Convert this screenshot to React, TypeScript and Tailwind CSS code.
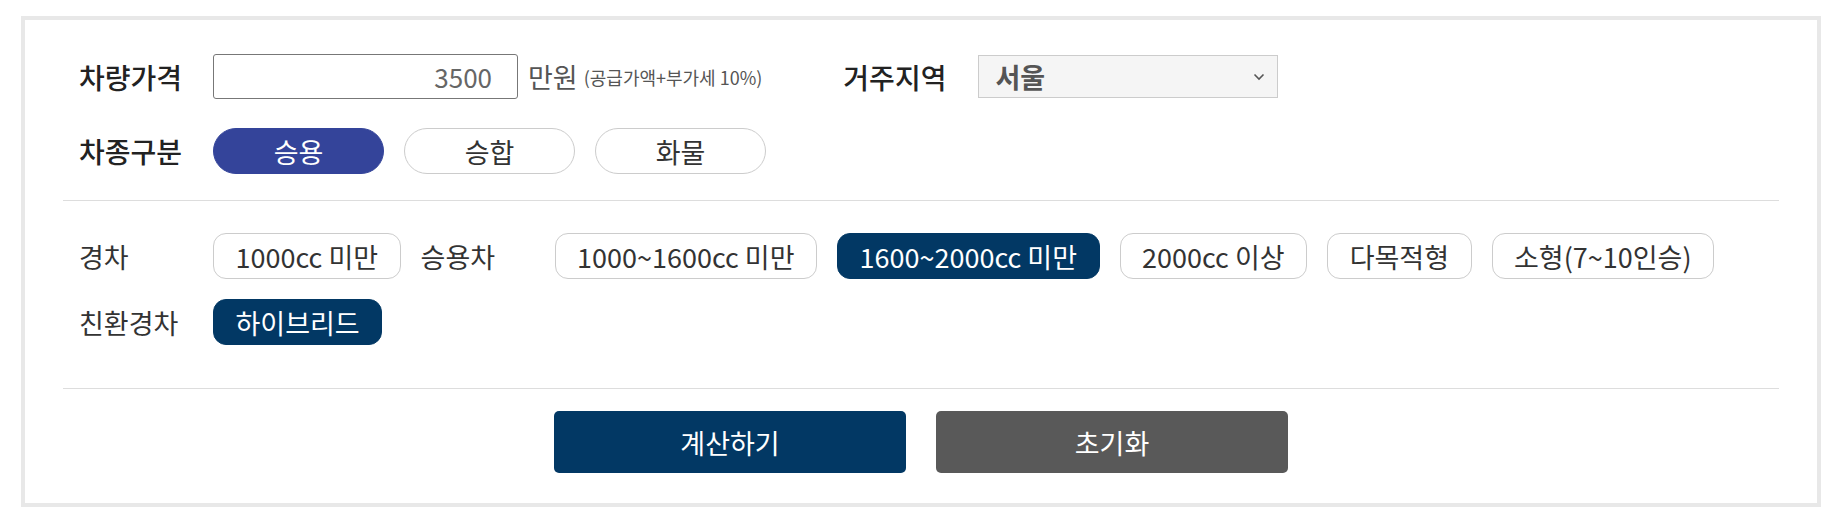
import React from "react";

const font = { fontFamily: '"Noto Sans CJK KR", "Noto Sans", sans-serif' };

function Pill({ label, active }: { label: string; active?: boolean }) {
  return (
    <button
      className={
        active
          ? "w-[171px] h-[46px] rounded-full bg-[#34449a] border border-[#34449a] text-white text-[27px] leading-none"
          : "w-[171px] h-[46px] rounded-full bg-white border border-[#cccccc] text-[#333333] text-[27px] leading-none"
      }
    >
      {label}
    </button>
  );
}

function Chip({ label, active }: { label: string; active?: boolean }) {
  return (
    <button
      className={
        active
          ? "h-[46px] px-[21.5px] rounded-[13px] bg-[#023864] border border-[#023864] text-white text-[27px] leading-none whitespace-nowrap"
          : "h-[46px] px-[21.5px] rounded-[13px] bg-white border border-[#cccccc] text-[#333333] text-[27px] leading-none whitespace-nowrap"
      }
    >
      {label}
    </button>
  );
}

export default function App() {
  return (
    <div className="bg-white min-h-[517px] pt-[16px] pl-[21px]" style={font}>
      <div className="w-[1800px] border-4 border-[#e8e8e8] bg-white px-[38px]">
        {/* Section 1 */}
        <div className="pt-[34px] pb-[26px] pl-[16px] flex flex-col gap-[29px]">
          <div className="flex items-center h-[45px]">
            <div className="w-[134px] text-[28px] font-medium text-[#222222] leading-none">차량가격</div>
            <div className="w-[305px] h-[45px] border border-[#777777] rounded-[3px] flex items-center justify-end pr-[25px] text-[26px] text-[#666666] leading-none">
              3500
            </div>
            <span className="ml-[10px] text-[27px] text-[#555555] leading-none">만원</span>
            <span className="ml-[6px] text-[18px] text-[#555555] leading-none">(공급가액+부가세 10%)</span>
            <div className="ml-[81px] text-[28px] font-medium text-[#222222] leading-none">거주지역</div>
            <div className="ml-[32px] w-[300px] h-[43px] bg-[#f5f5f5] border border-[#cccccc] flex items-center justify-between pl-[16px] pr-[12px]">
              <span className="text-[27px] font-bold text-[#555555] leading-none">서울</span>
              <svg width="12" height="8" viewBox="0 0 12 8" fill="none">
                <path d="M1.5 1.5 L6 6 L10.5 1.5" stroke="#555555" strokeWidth="1.6" />
              </svg>
            </div>
          </div>
          <div className="flex items-center">
            <div className="w-[134px] text-[28px] font-medium text-[#222222] leading-none">차종구분</div>
            <div className="flex gap-[20px]">
              <Pill label="승용" active />
              <Pill label="승합" />
              <Pill label="화물" />
            </div>
          </div>
        </div>

        {/* Section 2 */}
        <div className="border-t border-[#dddddd] pt-[32px] pb-[43px] pl-[16px] flex flex-col gap-[20px]">
          <div className="flex items-center gap-[20px]">
            <div className="w-[114px] text-[27px] text-[#333333] leading-none">경차</div>
            <Chip label="1000cc 미만" />
            <div className="w-[114px] text-[27px] text-[#333333] leading-none">승용차</div>
            <Chip label="1000~1600cc 미만" />
            <Chip label="1600~2000cc 미만" active />
            <Chip label="2000cc 이상" />
            <Chip label="다목적형" />
            <Chip label="소형(7~10인승)" />
          </div>
          <div className="flex items-center gap-[20px]">
            <div className="w-[114px] text-[27px] text-[#333333] leading-none">친환경차</div>
            <Chip label="하이브리드" active />
          </div>
        </div>

        {/* Section 3 */}
        <div className="border-t border-[#dddddd] pt-[22px] pb-[30px] flex justify-center gap-[30px]">
          <button className="w-[352px] h-[62px] rounded-[5px] bg-[#023864] text-white text-[27px] leading-none">
            계산하기
          </button>
          <button className="w-[352px] h-[62px] rounded-[5px] bg-[#595959] text-white text-[27px] leading-none">
            초기화
          </button>
        </div>
      </div>
    </div>
  );
}
